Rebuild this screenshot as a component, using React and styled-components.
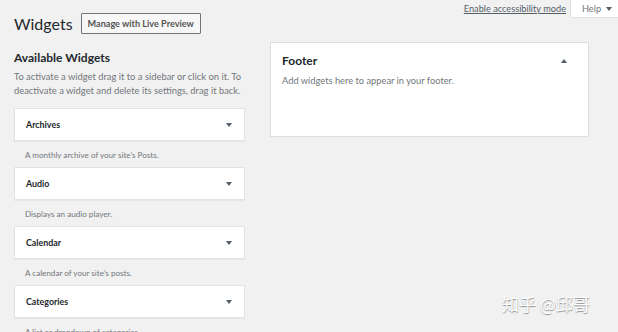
import React from "react";
import styled, { createGlobalStyle } from "styled-components";

const Global = createGlobalStyle`
  html, body { margin: 0; padding: 0; background: #f1f1f1; }
  body { font-family: Lato, "Open Sans", sans-serif; color: #23282d; }
  #root { min-height: 332px; }
`;

const Page = styled.div`
  position: relative;
  width: 618px;
  height: 332px;
  overflow: hidden;
  background: #f1f1f1;
`;

const Header = styled.div`
  display: flex;
  justify-content: space-between;
  align-items: flex-start;
  padding-left: 14px;
`;

const TitleRow = styled.div`
  display: flex;
  align-items: center;
  gap: 8px;
  padding-top: 13px;
`;

const Title = styled.h1`
  margin: 0;
  font-size: 16px;
  font-weight: 400;
  line-height: 21px;
  color: #23282d;
`;

const PreviewButton = styled.button`
  font-family: Lato, "Open Sans", sans-serif;
  height: 21px;
  padding: 0 6px;
  border: 1px solid #6f7478;
  background: #f7f7f7;
  color: #555;
  font-size: 9.1px;
  font-weight: 700;
  line-height: 19px;
  border-radius: 1px;
`;

const Meta = styled.div`
  display: flex;
  align-items: flex-start;
  gap: 4px;
`;

const MetaLink = styled.a`
  margin-top: 2px;
  font-size: 9.2px;
  line-height: 14px;
  color: #555d66;
  text-decoration: underline;
`;

const HelpTab = styled.div`
  width: 48px;
  height: 18px;
  box-sizing: border-box;
  background: #fff;
  border-left: 1px solid #e2e2e2;
  border-bottom: 1px solid #e2e2e2;
  display: flex;
  align-items: center;
  padding-left: 11px;
  gap: 5px;
  font-size: 9.2px;
  color: #72777c;
`;

const Main = styled.div`
  display: flex;
  align-items: flex-start;
  gap: 25px;
  padding-left: 14px;
  margin-top: 8px;
`;

const LeftCol = styled.div`
  width: 231px;
  flex: none;
`;

const SectionTitle = styled.h2`
  margin: 0;
  padding-top: 8px;
  font-size: 12px;
  font-weight: 700;
  line-height: 16px;
  color: #23282d;
`;

const Intro = styled.p`
  margin: 4px 0 10px;
  font-size: 9.4px;
  line-height: 14px;
  color: #72777c;
`;

const WidgetList = styled.div`
  display: flex;
  flex-direction: column;
`;

const Widget = styled.div`
  display: flex;
  flex-direction: column;
`;

const WidgetBox = styled.div`
  height: 33px;
  box-sizing: border-box;
  background: #fff;
  border: 1px solid #e3e3e3;
  box-shadow: 0 1px 1px rgba(0, 0, 0, 0.04);
  display: flex;
  align-items: center;
  justify-content: space-between;
  padding: 0 12px 0 11px;
`;

const WidgetName = styled.span`
  font-size: 8.9px;
  font-weight: 700;
  color: #23282d;
`;

const Arrow = styled.span`
  width: 0;
  height: 0;
  border-left: 3px solid transparent;
  border-right: 3px solid transparent;
  ${(p) =>
    p.$up
      ? "border-bottom: 4px solid #555d66;"
      : "border-top: 4px solid #555d66;"}
`;

const WidgetDesc = styled.div`
  font-size: 8.1px;
  line-height: 14px;
  color: #72777c;
  padding: 7px 0 5px 11px;
`;

const Panel = styled.div`
  width: 319px;
  height: 95px;
  box-sizing: border-box;
  background: #fff;
  border: 1px solid #dedede;
  padding: 10px 21px 0 11px;
`;

const PanelHead = styled.div`
  display: flex;
  align-items: center;
  justify-content: space-between;
`;

const PanelTitle = styled.h3`
  margin: 0;
  font-size: 12px;
  font-weight: 700;
  line-height: 16px;
  color: #23282d;
`;

const PanelDesc = styled.p`
  margin: 5px 0 0;
  font-size: 9.3px;
  line-height: 14px;
  color: #72777c;
`;

const Watermark = styled.div`
  position: absolute;
  left: 502px;
  top: 294px;
  font-family: "Noto Sans CJK SC", sans-serif;
  font-size: 17px;
  line-height: 20px;
  color: #ffffff;
  text-shadow: 0 1px 1px rgba(0, 0, 0, 0.3), 1px 1px 0 rgba(0, 0, 0, 0.12);
  white-space: nowrap;
`;

const widgets = [
  ["Archives", "A monthly archive of your site’s Posts."],
  ["Audio", "Displays an audio player."],
  ["Calendar", "A calendar of your site’s posts."],
  ["Categories", "A list or dropdown of categories."],
];

export default function App() {
  return (
    <Page>
      <Global />
      <Header>
        <TitleRow>
          <Title>Widgets</Title>
          <PreviewButton>Manage with Live Preview</PreviewButton>
        </TitleRow>
        <Meta>
          <MetaLink>Enable accessibility mode</MetaLink>
          <HelpTab>
            Help <Arrow />
          </HelpTab>
        </Meta>
      </Header>
      <Main>
        <LeftCol>
          <SectionTitle>Available Widgets</SectionTitle>
          <Intro>
            To activate a widget drag it to a sidebar or click on it. To
            deactivate a widget and delete its settings, drag it back.
          </Intro>
          <WidgetList>
            {widgets.map(([name, desc]) => (
              <Widget key={name}>
                <WidgetBox>
                  <WidgetName>{name}</WidgetName>
                  <Arrow />
                </WidgetBox>
                <WidgetDesc>{desc}</WidgetDesc>
              </Widget>
            ))}
          </WidgetList>
        </LeftCol>
        <Panel>
          <PanelHead>
            <PanelTitle>Footer</PanelTitle>
            <Arrow $up />
          </PanelHead>
          <PanelDesc>Add widgets here to appear in your footer.</PanelDesc>
        </Panel>
      </Main>
      <Watermark>知乎 @邱哥</Watermark>
    </Page>
  );
}
